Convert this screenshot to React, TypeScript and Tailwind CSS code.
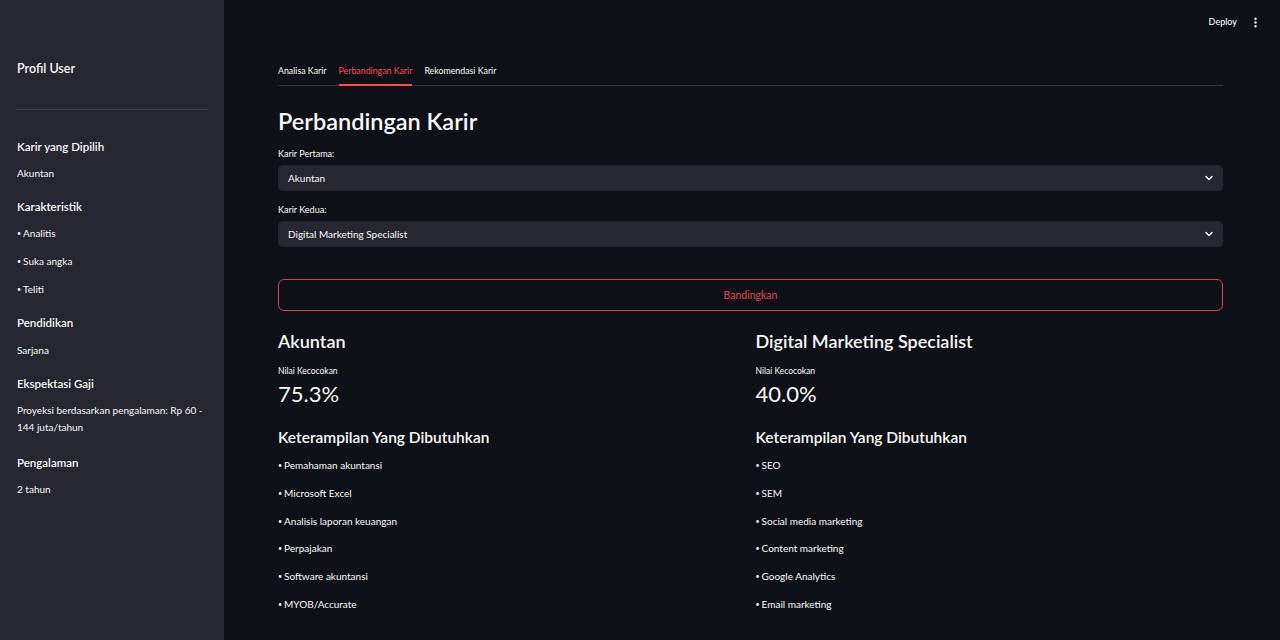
import { ChevronDown, EllipsisVertical } from "lucide-react";

const traits = ["Analitis", "Suka angka", "Teliti"];

const careers = [
  {
    name: "Akuntan",
    score: "75.3%",
    skills: [
      "Pemahaman akuntansi",
      "Microsoft Excel",
      "Analisis laporan keuangan",
      "Perpajakan",
      "Software akuntansi",
      "MYOB/Accurate",
    ],
  },
  {
    name: "Digital Marketing Specialist",
    score: "40.0%",
    skills: [
      "SEO",
      "SEM",
      "Social media marketing",
      "Content marketing",
      "Google Analytics",
      "Email marketing",
    ],
  },
];

function SideHeading({ children, className = "" }: { children: React.ReactNode; className?: string }) {
  return <div className={`pl-px text-[11.5px] leading-[16px] font-semibold ${className}`}>{children}</div>;
}

function SideText({ children, className = "" }: { children: React.ReactNode; className?: string }) {
  return <div className={`pl-px text-[10px] leading-[16px] ${className}`}>{children}</div>;
}

function Bullet({ text }: { text: string }) {
  return (
    <>
      <span className="text-[7px] align-[1px]">•</span>
      <span className="ml-[2px]">{text}</span>
    </>
  );
}

function Select({ value }: { value: string }) {
  return (
    <div className="mt-[5px] flex h-[26px] items-center justify-between rounded-[5px] bg-[#262730] pl-[10px] pr-[8px]">
      <span className="pt-px text-[10px]">{value}</span>
      <ChevronDown size={12} strokeWidth={3} className="text-[#fafafa]" />
    </div>
  );
}

export default function App() {
  return (
    <div
      className="flex h-[640px] w-[1280px] overflow-hidden bg-[#0e1117] text-[#fafafa]"
      style={{ fontFamily: "Lato, 'Noto Sans', sans-serif" }}
    >
      <aside className="w-[224px] shrink-0 bg-[#262730] px-[16px] pt-[60px]">
        <div className="pl-px text-[12.5px] leading-[18px] font-semibold">Profil User</div>
        <div className="mt-[31px] h-px bg-[#3d3f4a]" />

        <SideHeading className="mt-[29px]">Karir yang Dipilih</SideHeading>
        <SideText className="mt-[10px]">Akuntan</SideText>

        <SideHeading className="mt-[18px]">Karakteristik</SideHeading>
        {traits.map((t, i) => (
          <SideText key={t} className={i === 0 ? "mt-[10px]" : "mt-[12px]"}>
            <Bullet text={t} />
          </SideText>
        ))}

        <SideHeading className="mt-[18px]">Pendidikan</SideHeading>
        <SideText className="mt-[11px]">Sarjana</SideText>

        <SideHeading className="mt-[18px]">Ekspektasi Gaji</SideHeading>
        <div className="mt-[10px] pl-px text-[10px] leading-[17px]">
          Proyeksi berdasarkan pengalaman: Rp 60 - 144 juta/tahun
        </div>

        <SideHeading className="mt-[19px]">Pengalaman</SideHeading>
        <SideText className="mt-[10px]">2 tahun</SideText>
      </aside>

      <main className="flex min-w-0 flex-1 flex-col">
        <header className="flex h-[42px] items-center justify-end gap-[12px] pr-[18px] pt-[2px]">
          <span className="text-[9px] font-medium">Deploy</span>
          <EllipsisVertical size={13} strokeWidth={2.5} />
        </header>

        <div className="pl-[54px] pr-[57px] pt-[15px]">
          <div className="flex gap-[12px] border-b border-[#31333f] text-[8.8px]">
            <div className="-mb-px flex h-[29px] items-center pb-[2px]">Analisa Karir</div>
            <div className="-mb-px flex h-[29px] items-center border-b-2 border-[#ff4b4b] text-[#ff4b4b]">
              Perbandingan Karir
            </div>
            <div className="-mb-px flex h-[29px] items-center pb-[2px]">Rekomendasi Karir</div>
          </div>

          <h2 className="mt-[19px] text-[23.5px] leading-[32px] font-semibold">Perbandingan Karir</h2>

          <div className="mt-[11px] text-[9px] leading-[12px]">Karir Pertama:</div>
          <Select value="Akuntan" />

          <div className="mt-[13px] text-[9px] leading-[12px]">Karir Kedua:</div>
          <Select value="Digital Marketing Specialist" />

          <button className="mt-[32px] flex h-[32px] w-full items-center justify-center rounded-[6px] border border-[#d8414f] pt-px text-[10.5px] text-[#e4464f]">
            Bandingkan
          </button>

          <div className="mt-[18px] grid grid-cols-2 gap-[10px]">
            {careers.map((c) => (
              <div key={c.name}>
                <h3 className="text-[18px] leading-[24px] font-semibold">{c.name}</h3>
                <div className="mt-[12px] text-[8.5px] leading-[12px]">Nilai Kecocokan</div>
                <div className="mt-[2px] text-[22px] leading-[30px]">{c.score}</div>
                <h4 className="mt-[17px] text-[15.5px] leading-[22px] font-semibold">
                  Keterampilan Yang Dibutuhkan
                </h4>
                <ul className="mt-[9px] flex flex-col gap-[11.8px]">
                  {c.skills.map((s) => (
                    <li key={s} className="text-[10px] leading-[16px]">
                      <Bullet text={s} />
                    </li>
                  ))}
                </ul>
              </div>
            ))}
          </div>
        </div>
      </main>
    </div>
  );
}
